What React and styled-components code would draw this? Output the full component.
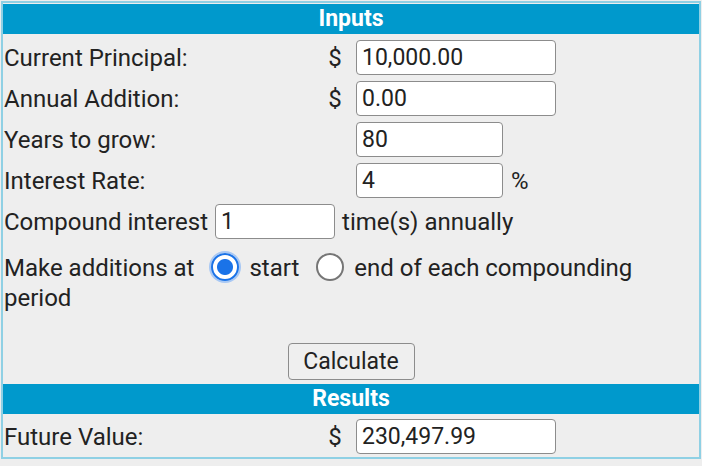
import React, { useState } from "react";
import styled, { createGlobalStyle } from "styled-components";

const GlobalStyle = createGlobalStyle`
  html, body {
    margin: 0;
    padding: 0;
    background: #eeeeee;
  }
  body {
    font-family: Roboto, "Liberation Sans", Arial, sans-serif;
    color: #222;
  }
`;

const Wrapper = styled.div`
  box-sizing: border-box;
  width: 700px;
  margin: 1px;
  border: 2px solid #8fd0e4;
  background: #eeeeee;
  padding: 1px 0 0;
  font-size: 24px;
`;

const SectionHeader = styled.div`
  height: 30px;
  line-height: 30px;
  background: #0099cc;
  color: #fff;
  font-weight: bold;
  font-size: 23px;
  text-align: center;
  margin: ${(p) => p.$margin || "0"};
`;

const FieldRow = styled.div`
  display: grid;
  grid-template-columns: 318px 26px 1fr;
  align-items: center;
  height: 41px;
  padding-left: 1px;
`;

const Label = styled.span`
  white-space: nowrap;
`;

const Unit = styled.span`
  text-align: center;
`;

const InputCell = styled.div`
  display: flex;
  align-items: center;
  gap: 8px;
  padding-left: 8px;
`;

const TextInput = styled.input`
  box-sizing: border-box;
  width: ${(p) => p.$width}px;
  height: 35px;
  border: 1px solid #8c8c8c;
  border-radius: 4px;
  background: #fff;
  padding: 0 5px;
  font: inherit;
  font-size: 23px;
  color: #222;
  outline: none;
`;

const InlineRow = styled.div`
  display: flex;
  align-items: center;
  gap: 7px;
  height: 41px;
  padding-left: 1px;
`;

const RadioRow = styled.div`
  padding: 11px 0 0 1px;
  line-height: 30px;
  max-width: 660px;
`;

const RadioLabel = styled.label`
  white-space: nowrap;
`;

const Radio = styled.input.attrs({ type: "radio" })`
  appearance: none;
  box-sizing: border-box;
  width: 28px;
  height: 28px;
  margin: 0 10px 0 17px;
  vertical-align: -5px;
  border-radius: 50%;
  border: 2px solid #767676;
  background: #fff;
  outline: none;

  &:checked {
    border-color: #1a73e8;
    background: radial-gradient(circle, #1a73e8 0 7.5px, #fff 8.5px);
    box-shadow: 0 0 0 2px #a8c8f4;
  }
`;

const ButtonRow = styled.div`
  display: flex;
  justify-content: center;
  padding-top: 30px;
`;

const Button = styled.button`
  box-sizing: border-box;
  width: 127px;
  height: 37px;
  border: 1px solid #8c8c8c;
  border-radius: 4px;
  background: #efefef;
  font: inherit;
  font-size: 23px;
  color: #222;
  padding: 0;
`;

export default function App() {
  const [at, setAt] = useState("start");

  return (
    <>
      <GlobalStyle />
      <Wrapper>
        <SectionHeader>Inputs</SectionHeader>
        <div style={{ height: 3 }} />
        <FieldRow>
          <Label>Current Principal:</Label>
          <Unit>$</Unit>
          <InputCell>
            <TextInput $width={200} defaultValue="10,000.00" />
          </InputCell>
        </FieldRow>
        <FieldRow>
          <Label>Annual Addition:</Label>
          <Unit>$</Unit>
          <InputCell>
            <TextInput $width={200} defaultValue="0.00" />
          </InputCell>
        </FieldRow>
        <FieldRow>
          <Label>Years to grow:</Label>
          <Unit />
          <InputCell>
            <TextInput $width={147} defaultValue="80" />
          </InputCell>
        </FieldRow>
        <FieldRow>
          <Label>Interest Rate:</Label>
          <Unit />
          <InputCell>
            <TextInput $width={147} defaultValue="4" />
            <span>%</span>
          </InputCell>
        </FieldRow>
        <InlineRow>
          <Label>Compound interest</Label>
          <TextInput $width={120} defaultValue="1" />
          <Label>time(s) annually</Label>
        </InlineRow>
        <RadioRow>
          Make additions at
          <RadioLabel>
            <Radio
              name="at"
              checked={at === "start"}
              onChange={() => setAt("start")}
            />
            start
          </RadioLabel>
          <RadioLabel>
            <Radio
              name="at"
              checked={at === "end"}
              onChange={() => setAt("end")}
            />
            end of each compounding
          </RadioLabel>{" "}
          period
        </RadioRow>
        <ButtonRow>
          <Button>Calculate</Button>
        </ButtonRow>
        <SectionHeader $margin="4px 0 2px">Results</SectionHeader>
        <FieldRow>
          <Label>Future Value:</Label>
          <Unit>$</Unit>
          <InputCell>
            <TextInput $width={200} defaultValue="230,497.99" />
          </InputCell>
        </FieldRow>
      </Wrapper>
    </>
  );
}
